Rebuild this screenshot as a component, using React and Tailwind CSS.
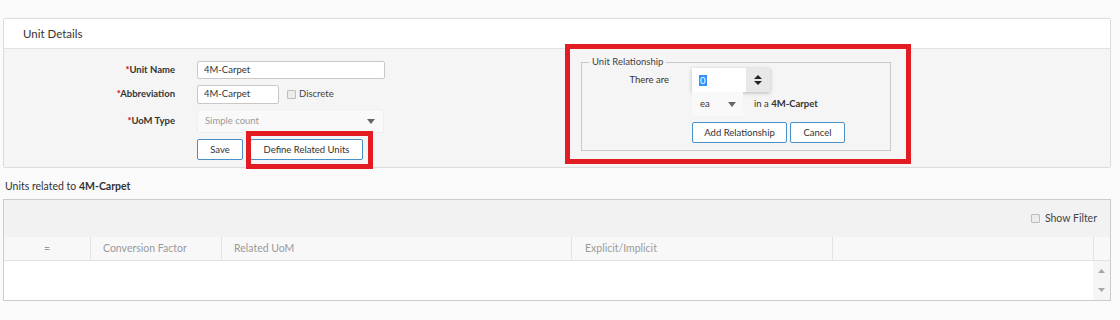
import React from "react";

function Caret({ className = "" }) {
  return (
    <svg width="8" height="5" viewBox="0 0 8 5" className={className}>
      <path d="M0 0 L8 0 L4 5 Z" fill="#666" />
    </svg>
  );
}

function Check() {
  return <span className="inline-block w-[9px] h-[9px] border border-[#bdbdbd] bg-[#ececec] rounded-[1px]" />;
}

function Btn({ children, className = "" }) {
  return (
    <button className={"block h-[21px] border border-[#4a90c8] bg-white rounded-[2px] text-[#333] text-[9.5px] leading-none " + className}>
      {children}
    </button>
  );
}

function Row({ label, className = "", children }) {
  return (
    <div className={"flex items-center " + className}>
      <div className="w-[171px] mr-[22px] text-right font-bold text-[9.5px] text-[#333]">
        {label && <span className="text-[#c00]">*</span>}
        {label}
      </div>
      {children}
    </div>
  );
}

export default function App() {
  return (
    <div className="w-[1120px] h-[320px] overflow-hidden bg-[#fafafa] pt-[18px] pl-[3px] pr-[9px] text-[#333] font-[family-name:Lato,sans-serif]">
      <section className="border border-[#dcdcdc] rounded-[2px]">
        <div className="h-[30px] bg-white border-b border-[#e2e2e2] flex items-center pl-[19px] text-[11.5px] text-[#333]">
          Unit Details
        </div>
        <div className="bg-[#f5f5f5] h-[118px] flex">
          <div className="w-[577px] pt-[12px] flex flex-col">
            <Row label="Unit Name" className="h-[18px]">
              <div className="h-[18px] w-[188px] bg-white border border-[#c8c8c8] rounded-[2px] flex items-center px-[6px] text-[9.5px]">
                4M-Carpet
              </div>
            </Row>

            <Row label="Abbreviation" className="h-[19px] mt-[6px]">
              <div className="h-[19px] w-[82px] bg-white border border-[#c8c8c8] rounded-[2px] flex items-center px-[6px] text-[9.5px]">
                4M-Carpet
              </div>
              <span className="ml-[8px] flex items-center gap-[3px] text-[9.5px] text-[#444]">
                <Check />
                Discrete
              </span>
            </Row>

            <Row label="UoM Type" className="h-[24px] mt-[5px]">
              <div className="h-[24px] w-[187px] bg-[#f9f9f9] border border-[#eeeeee] rounded-[2px] flex items-center justify-between pl-[7px] pr-[8px] text-[9.5px] text-[#999]">
                Simple count
                <Caret />
              </div>
            </Row>

            <Row label="" className="h-[21px] mt-[6px]">
              <div className="flex gap-[7px]">
                <Btn className="w-[46px]">Save</Btn>
                <div className="relative flex">
                  <Btn className="w-[113px]">Define Related Units</Btn>
                  <span className="absolute left-[-4px] top-[-8px] w-[127px] h-[38px] border-[5px] border-[#e31b23] pointer-events-none" />
                </div>
              </div>
            </Row>
          </div>

          <div className="relative mt-[7px] self-start">
            <fieldset className="w-[310px] border border-[#c9c9c9] pb-[7px]">
              <legend className="ml-[7px] px-[3px] text-[9.5px] leading-[12px] text-[#444]">Unit Relationship</legend>
              <div className="grid grid-cols-[87px_1fr] gap-x-[23px] items-start">
                <div className="text-right text-[9.5px] text-[#333] pt-[5px]">There are</div>
                <div className="flex flex-col items-start">
                  <div className="flex h-[24px] w-[78px] shadow-[0_1px_4px_rgba(0,0,0,0.25)]">
                    <div className="flex-1 bg-white flex items-center pl-[7px] text-[9.5px]">
                      <span className="bg-[#3390ff] text-white px-[1px] leading-[11px]">0</span>
                    </div>
                    <div className="w-[24px] bg-[#e8e8e8] flex flex-col items-center justify-center gap-[2px]">
                      <svg width="8" height="4" viewBox="0 0 8 4"><path d="M0 4 L4 0 L8 4 Z" fill="#222" /></svg>
                      <svg width="8" height="4" viewBox="0 0 8 4"><path d="M0 0 L8 0 L4 4 Z" fill="#222" /></svg>
                    </div>
                  </div>
                  <div className="flex items-center">
                    <div className="h-[24px] w-[51px] bg-[#f9f9f9] flex items-center justify-between pl-[8px] pr-[7px] text-[9.5px] text-[#333]">
                      ea
                      <Caret />
                    </div>
                    <span className="ml-[11px] text-[9.5px] text-[#333]">
                      in a <b>4M-Carpet</b>
                    </span>
                  </div>
                  <div className="mt-[6px] flex gap-[3px]">
                    <Btn className="w-[95px]">Add Relationship</Btn>
                    <Btn className="w-[55px]">Cancel</Btn>
                  </div>
                </div>
              </div>
            </fieldset>
            <span className="absolute left-[-16px] top-[-12px] w-[346px] h-[120px] border-[5px] border-[#e31b23] pointer-events-none" />
          </div>
        </div>
      </section>

      <div className="mt-[12px] pl-[2px] h-[14px] flex items-center text-[10.5px] text-[#333]">
        Units related to&nbsp;<b>4M-Carpet</b>
      </div>

      <div className="mt-[5px] border border-[#cccccc]">
        <div className="h-[37px] bg-[#f2f2f3] flex items-center justify-end pr-[13px] text-[10.5px] text-[#444]">
          <span className="flex items-center gap-[5px]">
            <Check />
            Show Filter
          </span>
        </div>
        <div className="h-[24px] bg-[#f8f8f8] border-b border-[#e3e3e3] flex text-[10.5px] text-[#9a9a9a]">
          <div className="w-[87px] border-r border-[#e3e3e3] flex items-center justify-center">=</div>
          <div className="w-[131px] border-r border-[#e3e3e3] flex items-center pl-[12px]">Conversion Factor</div>
          <div className="w-[350px] border-r border-[#e3e3e3] flex items-center pl-[12px]">Related UoM</div>
          <div className="w-[261px] border-r border-[#e3e3e3] flex items-center pl-[13px]">Explicit/Implicit</div>
          <div className="w-[261px] border-r border-[#e3e3e3]" />
          <div className="flex-1" />
        </div>
        <div className="h-[39px] bg-white flex">
          <div className="flex-1" />
          <div className="w-[17px] bg-[#f5f5f5] flex flex-col items-center justify-between py-[8px]">
            <svg width="7" height="4" viewBox="0 0 7 4"><path d="M0 4 L3.5 0 L7 4 Z" fill="#a8a8a8" /></svg>
            <svg width="7" height="4" viewBox="0 0 7 4"><path d="M0 0 L7 0 L3.5 4 Z" fill="#a8a8a8" /></svg>
          </div>
        </div>
      </div>
    </div>
  );
}
